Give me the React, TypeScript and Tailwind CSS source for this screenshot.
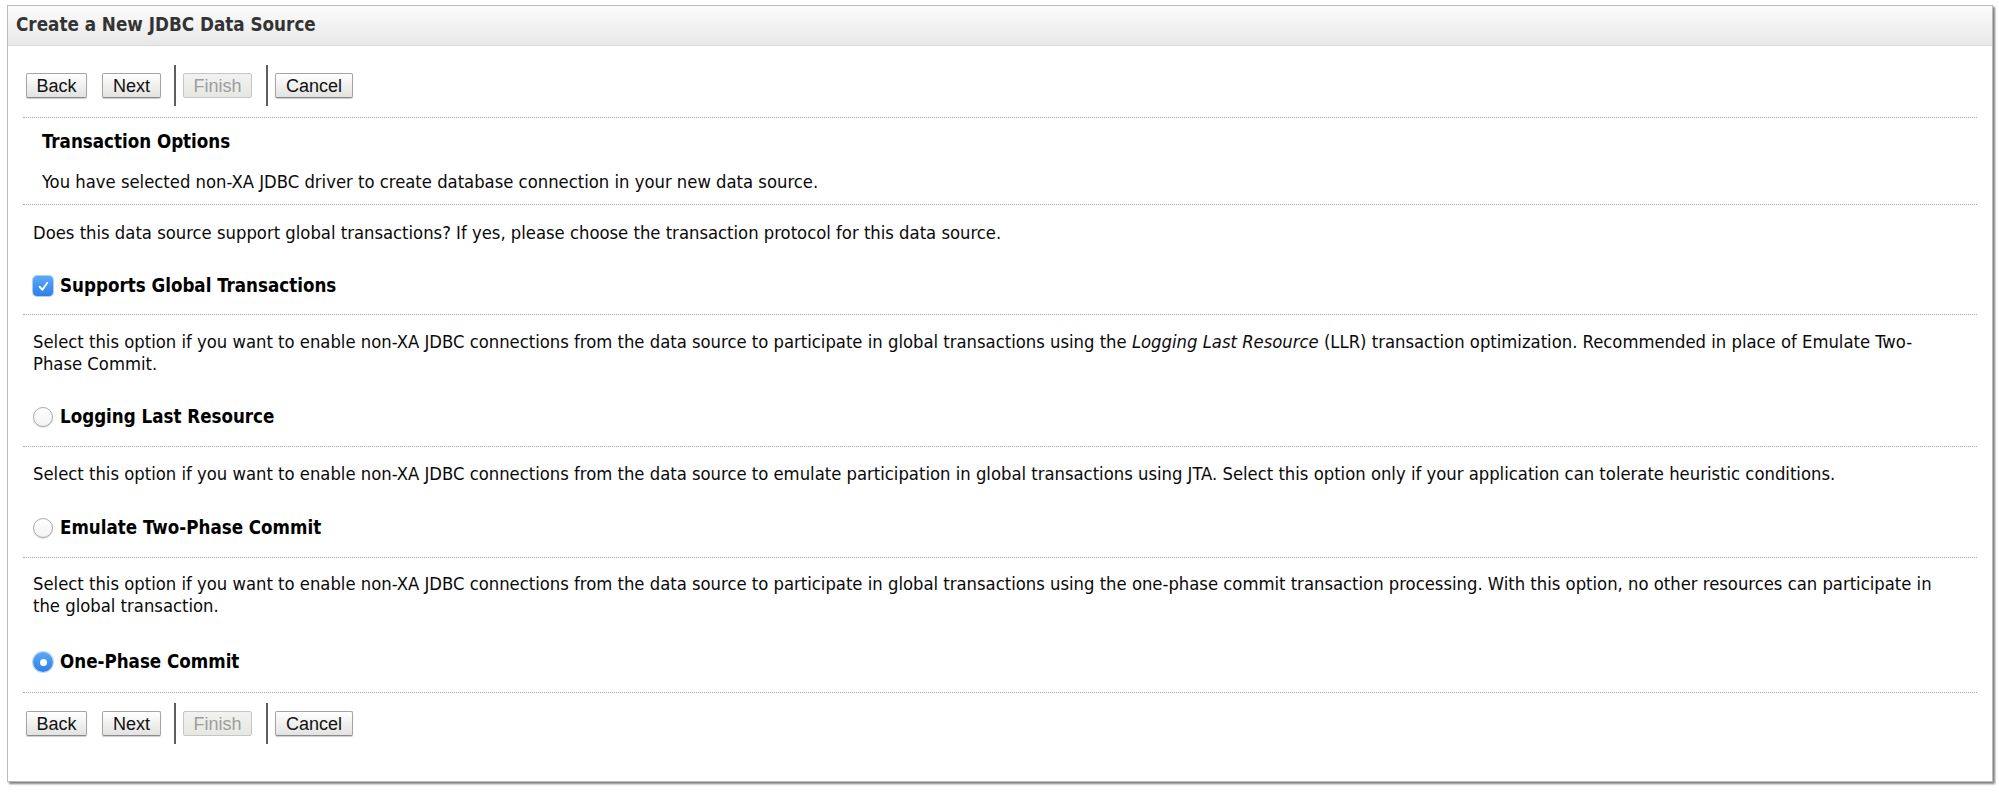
import React from "react";

function Btn({ label, w, disabled }: { label: string; w: string; disabled?: boolean }) {
  return (
    <div
      className={
        "flex h-[25px] items-center justify-center rounded-[2px] border font-['Liberation_Sans',Arial,sans-serif] text-[18px] leading-none " +
        w +
        (disabled
          ? " border-[#c6c6c6] bg-gradient-to-b from-[#f2f2f0] to-[#e6e6e3] text-[#9d9d9d]"
          : " border-[#a5a5a5] border-b-[#8a8a8a] bg-gradient-to-b from-[#ffffff] to-[#e2e2e0] text-[#111] shadow-[0_1px_1px_rgba(0,0,0,0.2)]")
      }
    >
      {label}
    </div>
  );
}

function ButtonBar() {
  return (
    <div className="ml-[3px] flex h-[41px] items-center">
      <Btn label="Back" w="w-[61px]" />
      <div className="ml-[15px]">
        <Btn label="Next" w="w-[59px]" />
      </div>
      <div className="ml-[13px] h-[41px] w-[2px] bg-[#5e5e5e]" />
      <div className="ml-[7px]">
        <Btn label="Finish" w="w-[69px]" disabled />
      </div>
      <div className="ml-[14px] h-[41px] w-[2px] bg-[#5e5e5e]" />
      <div className="ml-[7px]">
        <Btn label="Cancel" w="w-[78px]" />
      </div>
    </div>
  );
}

function Dots({ className = "" }: { className?: string }) {
  return <div className={"h-0 border-t border-dotted border-[#a9a9a9] " + className} />;
}

function Checkbox() {
  return (
    <div className="flex h-[20px] w-[20px] items-center justify-center rounded-[4px] bg-gradient-to-b from-[#5aa9f7] to-[#2f7fea] shadow-[0_0_0_1px_rgba(40,110,210,0.35)]">
      <svg width="13" height="13" viewBox="0 0 12 12" fill="none">
        <path d="M2.5 6.3 L5 9 L9.5 2.5" stroke="white" strokeWidth="1.8" strokeLinecap="round" strokeLinejoin="round" />
      </svg>
    </div>
  );
}

function Radio({ checked }: { checked?: boolean }) {
  if (checked) {
    return (
      <div className="flex h-[20px] w-[20px] items-center justify-center rounded-full bg-gradient-to-b from-[#5aa9f7] to-[#2f7fea] shadow-[0_0_0_1px_rgba(40,110,210,0.3)]">
        <div className="h-[7px] w-[7px] rounded-full bg-white" />
      </div>
    );
  }
  return (
    <div className="h-[20px] w-[20px] rounded-full border border-[#a9a9a9] bg-gradient-to-b from-[#ffffff] to-[#f3f3f3] shadow-[0_1px_1px_rgba(0,0,0,0.15)]" />
  );
}

function OptionRow({ control, label }: { control: React.ReactNode; label: string }) {
  return (
    <div className="flex h-[22px] items-center">
      <div className="ml-[10px]">{control}</div>
      <span className="ml-[7px] text-[18.6px] font-bold text-black">{label}</span>
    </div>
  );
}

export default function App() {
  return (
    <div className="min-h-[793px] bg-white pl-[7px] pr-[6px] pt-[5px] font-['DejaVu_Sans_Condensed','DejaVu_Sans',sans-serif]">
      <div className="border border-[#b9bcbf] bg-white pb-[37px] shadow-[2px_2px_2px_rgba(0,0,0,0.5)]">
        <div className="flex h-[40px] items-center border-b border-[#d6d7d6] bg-gradient-to-b from-[#fcfcfc] to-[#e7e8e7] pl-[8px]">
          <h1 className="text-[18.7px] font-bold text-[#333]">Create a New JDBC Data Source</h1>
        </div>

        <div className="px-[15px] text-[18.3px] leading-[22px] text-[#0a0a0a]">
          <div className="mt-[19px]">
            <ButtonBar />
          </div>
          <Dots className="mt-[11px]" />

          <div className="ml-[19px] mt-[13px] text-[18.6px] font-bold text-black">Transaction Options</div>
          <div className="ml-[19px] mt-[18px]">
            You have selected non-XA JDBC driver to create database connection in your new data source.
          </div>
          <Dots className="mt-[11px]" />

          <div className="ml-[10px] mt-[17px]">
            Does this data source support global transactions? If yes, please choose the transaction protocol for this data source.
          </div>
          <div className="mt-[31px]">
            <OptionRow control={<Checkbox />} label="Supports Global Transactions" />
          </div>
          <Dots className="mt-[17px]" />

          <div className="ml-[10px] mt-[16px] whitespace-nowrap">
            Select this option if you want to enable non-XA JDBC connections from the data source to participate in global transactions using the{" "}
            <i>Logging Last Resource</i> (LLR) transaction optimization. Recommended in place of Emulate Two-
            <br />
            Phase Commit.
          </div>
          <div className="mt-[31px]">
            <OptionRow control={<Radio />} label="Logging Last Resource" />
          </div>
          <Dots className="mt-[18px]" />

          <div className="ml-[10px] mt-[16px] whitespace-nowrap">
            Select this option if you want to enable non-XA JDBC connections from the data source to emulate participation in global transactions using JTA. Select this option only if your application can tolerate heuristic conditions.
          </div>
          <div className="mt-[32px]">
            <OptionRow control={<Radio />} label="Emulate Two-Phase Commit" />
          </div>
          <Dots className="mt-[18px]" />

          <div className="ml-[10px] mt-[15px] whitespace-nowrap">
            Select this option if you want to enable non-XA JDBC connections from the data source to participate in global transactions using the one-phase commit transaction processing. With this option, no other resources can participate in
            <br />
            the global transaction.
          </div>
          <div className="mt-[34px]">
            <OptionRow control={<Radio checked />} label="One-Phase Commit" />
          </div>
          <Dots className="mt-[19px]" />

          <div className="mt-[10px]">
            <ButtonBar />
          </div>
        </div>
      </div>
    </div>
  );
}
